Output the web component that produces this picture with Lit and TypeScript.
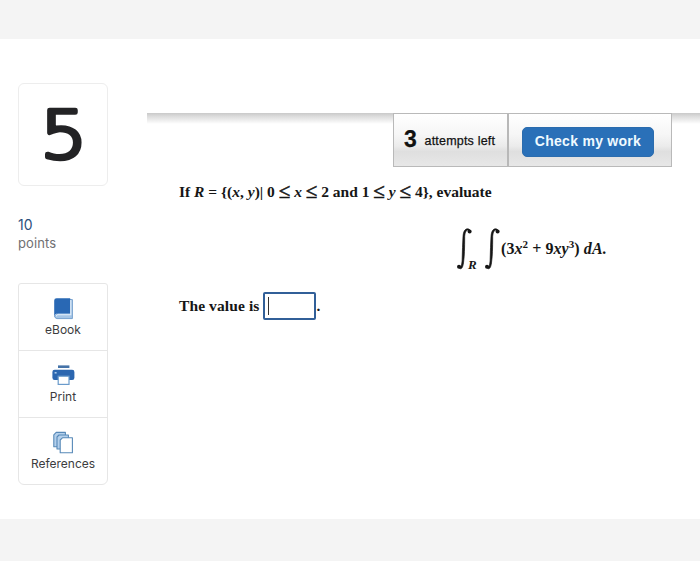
import { LitElement, html, css, svg } from "lit";
import { customElement, property } from "lit/decorators.js";

const bookIcon = svg`
  <path d="M18 2.6h2.4v19H5a2.4 2.4 0 0 1-2.2-2.4z" fill="#a5c5e6" stroke="#5d8fc4" stroke-width=".8"/>
  <path d="M2.2 3.6a2.4 2.4 0 0 1 2.4-2.4h13.6v15.2H5.6a3 3 0 0 0-3 3.4h-.4z" fill="#2968b4"/>
  <path d="M4 19.3c.2-1 .8-1.5 1.8-1.5H18.8V3" fill="none" stroke="#e4f0fa" stroke-width="1.1"/>`;

const printIcon = svg`
  <rect x="6" y="1.4" width="11.4" height="2.6" fill="#4573a8"/>
  <rect x=".4" y="5.8" width="22" height="10.2" rx="2.2" fill="#2c67b0"/>
  <rect x="2.6" y="8" width="2" height="1.6" fill="#a9c9ea"/>
  <rect x="6.2" y="12.2" width="10.8" height="8.2" fill="#fff" stroke="#6a9bcb" stroke-width="1.2"/>`;

const pagesIcon = svg`
  <g stroke="#5789b8" stroke-width="1.1" stroke-linejoin="round">
    <path d="M4.2 1.4h9.2v14.4H1.8V3.8z" fill="#b4d0ec"/>
    <path d="M7 4h9.4v14H5V6z" fill="#b4d0ec"/>
    <path d="M10.4 6.8h10v15H8.2V9z" fill="#fff"/>
  </g>`;

@customElement("tool-item")
class ToolItem extends LitElement {
  @property() label = "";
  @property({ attribute: false }) icon: unknown;
  static styles = css`
    :host { display: flex; flex-direction: column; align-items: center; box-sizing: border-box; height: 67px; padding-top: 13px; font: 12px/14px Inter, sans-serif; color: #3c3c3e; }
    svg { width: 23px; height: 23px; display: block; }
    .label { margin-top: 3px; white-space: nowrap; }
  `;
  render() {
    return html`<svg viewBox="0 0 23 23">${this.icon}</svg><span class="label">${this.label}</span>`;
  }
}

@customElement("app-root")
class AppRoot extends LitElement {
  static styles = css`
    :host { display: block; height: 562px; background: #fff; overflow: hidden; }
    * { box-sizing: border-box; }
    .page { display: grid; grid-template-rows: 39px 480px 42px 1px; height: 562px; }
    .band { background: #f4f4f4; }
    .body { display: flex; align-items: flex-start; }
    .side { width: 90px; margin: 44px 0 0 18px; flex: none; font-family: Inter, sans-serif; }
    .number { width: 90px; height: 103px; border: 1px solid #ededed; border-radius: 6px; }
    .number svg { display: block; width: 88px; height: 101px; }
    .digit { font-family: "DejaVu Sans Light", "DejaVu Sans", sans-serif; font-weight: 200; font-size: 66px; fill: #232325; stroke: #232325; stroke-width: 4.5px; stroke-linejoin: round; }
    .points { margin-top: 29px; font-size: 13px; line-height: 19px; letter-spacing: .1px; color: #707072; }
    .points b { display: block; font-weight: 400; font-size: 14px; color: #2e4f7c; }
    .tools { margin-top: 30px; height: 202px; border: 1px solid #e6e6e6; border-radius: 3px 3px 6px 6px; }
    tool-item:first-child { height: 66px; }
    tool-item + tool-item { border-top: 1px solid #e6e6e6; }
    .main { margin: 74px 0 0 39px; flex: 1; }
    .bar { height: 54px; display: flex; justify-content: flex-end; padding-right: 28px; background: linear-gradient(#c9c9c9, #dadada 3px, #fff 11px); }
    .panel { display: flex; width: 279px; height: 54px; border: 1px solid #b9b9b9; background: linear-gradient(#fff 0, #f6f6f6 40%, #ebebeb 62%, #dfdfdf 72%, #e7e7e7); font-family: "Liberation Sans", sans-serif; }
    .attempts { width: 115px; border-right: 2px solid #b8b8b8; display: flex; align-items: baseline; padding: 12px 0 0 10px; color: #111; font-size: 12.5px; letter-spacing: .2px; white-space: nowrap; -webkit-text-stroke: .25px #111; }
    .attempts b { font-size: 23px; line-height: 27px; width: 20.5px; }
    .attempts span { position: relative; top: -2px; }
    .check { width: 132px; height: 30px; margin: 13px 0 0 13px; padding: 0 0 3px; border: 1px solid #2b6cae; border-radius: 5px; background: #2a70b8; color: #effaff; font: bold 14px/24px "Liberation Sans", sans-serif; letter-spacing: .28px; white-space: nowrap; }
    .text { font: bold 15.5px/20px "Liberation Serif", serif; color: #161616; white-space: nowrap; }
    .set { margin: 15px 0 0 32px; }
    .le { font-size: 21px; line-height: 0; font-weight: 400; vertical-align: -1px; -webkit-text-stroke: .5px #161616; }
    .formula { height: 60px; margin: 18px 0 0 309px; display: flex; align-items: flex-start; font-size: 16px; }
    .integral { width: 28px; height: 46px; position: relative; flex: none; }
    .integral svg { display: block; width: 17px; height: 43px; margin-top: 8px; }
    .sub { position: absolute; left: 12px; top: 38px; font-size: 13px; line-height: 14px; font-style: italic; }
    .second { width: 17px; }
    .expr { margin: 19px 0 0 0; letter-spacing: .07px; }
    sup { font-size: 11px; line-height: 0; vertical-align: 6px; }
    .answer { display: flex; align-items: center; margin: 12px 0 0 32px; letter-spacing: .1px; }
    .field { width: 53px; height: 28px; margin-left: 4px; border: 2px solid #315f98; border-radius: 2px; padding: 3px 0 0 3px; }
    .caret { width: 1px; height: 18px; background: #333; }
  `;

  integral(sub: string) {
    return html`<span class="integral ${sub ? "" : "second"}">
      <svg viewBox="0 0 17 43">
        <path d="M14.2 3.8C12.2.4 9 2 8.7 8.6Q8.7 26 7.7 33C7 41.4 4.4 42.2 2.4 39Q5.6 40.4 6.1 33Q6.5 18 7 8.6C7.4.2 12-.6 14.6 2.6z" fill="#161616" stroke="#161616" stroke-width=".7"/>
        <circle cx="13.6" cy="3.6" r="2" fill="#161616"/><circle cx="3" cy="38.8" r="2" fill="#161616"/>
      </svg>${sub ? html`<span class="sub">${sub}</span>` : ""}</span>`;
  }

  render() {
    const le = html`<span class="le">≤</span>`;
    return html`<div class="page">
      <div class="band"></div>
      <div class="body">
        <div class="side">
          <div class="number"><svg viewBox="0 0 88 101"><text class="digit" transform="translate(44.8 73.5) scale(1.12 1)" text-anchor="middle">5</text></svg></div>
          <div class="points"><b>10</b>points</div>
          <div class="tools">
            <tool-item label="eBook" .icon=${bookIcon}></tool-item>
            <tool-item label="Print" .icon=${printIcon}></tool-item>
            <tool-item label="References" .icon=${pagesIcon}></tool-item>
          </div>
        </div>
        <div class="main">
          <div class="bar"><div class="panel">
            <div class="attempts"><b>3</b><span>attempts left</span></div>
            <button class="check">Check my work</button>
          </div></div>
          <div class="text set">If <i>R</i> = {(<i>x</i>, <i>y</i>)| 0 ${le} <i>x</i> ${le} 2 and 1 ${le} <i>y</i> ${le} 4}, evaluate</div>
          <div class="text formula">${this.integral("R")}${this.integral("")}<span class="expr">(3<i>x</i><sup>2</sup> + 9<i>xy</i><sup>3</sup>) <i>dA.</i></span></div>
          <div class="text answer">The value is<span class="field"><div class="caret"></div></span>.</div>
        </div>
      </div>
      <div class="band"></div>
    </div>`;
  }
}
